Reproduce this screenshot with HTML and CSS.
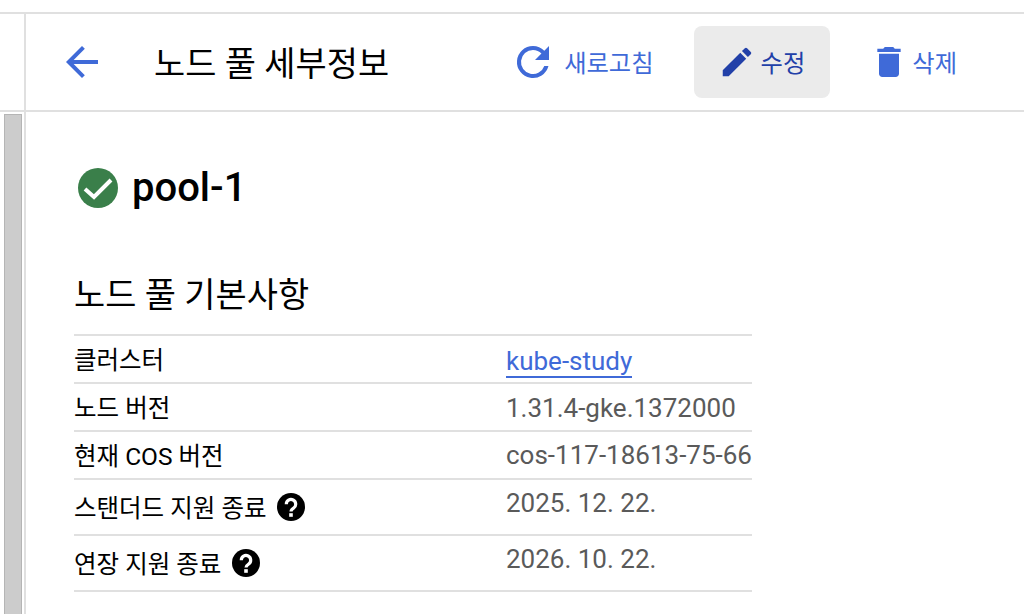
FILE: index.html
```html
<!DOCTYPE html>
<html lang="ko">
<head>
    <meta charset="UTF-8">
    <meta name="viewport" content="width=device-width, initial-scale=1.0">
    <title>노드 풀 세부정보</title>
    <link rel="stylesheet" href="styles.css">
</head>
<body>
    <div class="navbar">
        <div class="rail"></div>
        <div class="toolbar">
            <a class="back">
                <svg width="48" height="48" viewBox="0 0 24 24"><path d="M20 11H7.83l5.59-5.59L12 4l-8 8 8 8 1.41-1.41L7.83 13H20v-2z"/></svg>
            </a>
            <h1>노드 풀 세부정보</h1>
            <button class="btn btn-refresh">
                <svg width="48" height="48" viewBox="0 0 24 24"><path d="M17.65 6.35A7.96 7.96 0 0 0 12 4a8 8 0 1 0 7.73 10h-2.08A6 6 0 1 1 12 6c1.66 0 3.14.69 4.22 1.78L13 11h7V4l-2.35 2.35z"/></svg>
                <span>새로고침</span>
            </button>
            <button class="btn btn-edit">
                <svg width="38" height="38" viewBox="0 0 24 24"><path d="M3 17.25V21h3.75L17.81 9.94l-3.75-3.75L3 17.25zM20.71 7.04a1 1 0 0 0 0-1.41l-2.34-2.34a1 1 0 0 0-1.41 0l-1.83 1.83 3.75 3.75 1.83-1.83z"/></svg>
                <span>수정</span>
            </button>
            <button class="btn btn-delete">
                <svg width="40" height="40" viewBox="0 0 24 24"><path d="M6 19c0 1.1.9 2 2 2h8c1.1 0 2-.9 2-2V7H6v12zM19 4h-3.5l-1-1h-5l-1 1H5v2h14V4z"/></svg>
                <span>삭제</span>
            </button>
        </div>
    </div>
    <div class="container">
        <div class="rail">
            <div class="scrollbar"></div>
        </div>
        <div class="content">
            <div class="status">
                <svg width="40" height="40" viewBox="0 0 40 40"><circle cx="20" cy="20" r="20" fill="#3a7f4a"/><path d="M7 21l9 8L33 12" fill="none" stroke="#fff" stroke-width="4"/></svg>
                <h2>pool-1</h2>
            </div>
            <h3>노드 풀 기본사항</h3>
            <div class="details">
                <div class="row">
                    <div class="label">클러스터</div>
                    <div class="value value-link"><a class="link">kube-study</a></div>
                </div>
                <div class="row">
                    <div class="label">노드 버전</div>
                    <div class="value value-version">1.31.4-gke.1372000</div>
                </div>
                <div class="row">
                    <div class="label">현재 COS 버전</div>
                    <div class="value">cos-117-18613-75-66</div>
                </div>
                <div class="row row-tall">
                    <div class="label">스탠더드 지원 종료
                        <svg width="28" height="28" viewBox="0 0 28 28"><circle cx="14" cy="14" r="14"/><path d="M9.3 11.2a4.7 4.7 0 1 1 7.4 3.8c-1.9 1.3-2.7 2-2.7 3.6" fill="none" stroke="#fff" stroke-width="3.2"/><rect x="12.2" y="20.2" width="3.6" height="3.6" fill="#fff"/></svg>
                    </div>
                    <div class="value">2025. 12. 22.</div>
                </div>
                <div class="row row-tall">
                    <div class="label">연장 지원 종료
                        <svg width="28" height="28" viewBox="0 0 28 28"><circle cx="14" cy="14" r="14"/><path d="M9.3 11.2a4.7 4.7 0 1 1 7.4 3.8c-1.9 1.3-2.7 2-2.7 3.6" fill="none" stroke="#fff" stroke-width="3.2"/><rect x="12.2" y="20.2" width="3.6" height="3.6" fill="#fff"/></svg>
                    </div>
                    <div class="value">2026. 10. 22.</div>
                </div>
            </div>
        </div>
    </div>
</body>
</html>
```

FILE: styles.css
```css
html, body {
    height: 100%;
}

body {
    margin: 0;
    overflow: hidden;
    font-family: Roboto, "Noto Sans CJK KR", sans-serif;
    color: #000;
    background-color: #fff;
    display: flex;
    flex-direction: column;
}

.navbar {
    display: flex;
    height: 96px;
    margin-top: 12px;
    border-top: 2px solid #e0e0e0;
    border-bottom: 2px solid #e0e0e0;
}

.rail {
    width: 24px;
    flex: none;
    border-right: 2px solid #e0e0e0;
}

.toolbar {
    flex: 1;
    display: flex;
    align-items: center;
}

.back {
    display: flex;
    margin-left: 32px;
    fill: #3f6ad8;
}

h1 {
    margin: 0 auto 2px 48px;
    font-size: 33.9px;
    font-weight: 400;
}

.btn {
    display: flex;
    align-items: center;
    height: 72px;
    padding: 0 24px;
    border: none;
    border-radius: 8px;
    background: none;
    font-family: inherit;
    font-size: 24.3px;
    color: #3f6ad8;
    fill: #3f6ad8;
}

.btn span {
    margin-bottom: 2px;
}

.btn-refresh {
    gap: 7px;
}

.btn-edit {
    gap: 5px;
    padding-right: 25px;
    background-color: #ebebeb;
    color: #2240a8;
    fill: #2240a8;
    margin-left: 16px;
}

.btn-delete {
    gap: 3px;
    margin: 0 43px 0 15px;
}

.container {
    flex: 1;
    display: flex;
}

.scrollbar {
    width: 18px;
    margin: 2px 0 0 4px;
    height: 100%;
    box-sizing: border-box;
    background-color: #cccccc;
    border: 1px solid #b5b5b5;
}

.content {
    flex: 1;
    padding: 0 48px;
}

.status {
    display: flex;
    align-items: center;
    gap: 14px;
    margin-top: 54px;
    margin-left: 4px;
}

h2 {
    margin: 0;
    font-size: 40px;
    line-height: 44px;
    font-weight: 500;
}

h3 {
    margin: 58px 0 17px;
    font-size: 33.9px;
    font-weight: 400;
}

.details {
    width: 678px;
    border-top: 2px solid #e0e0e0;
}

.row {
    display: flex;
    height: 46px;
    border-bottom: 2px solid #e0e0e0;
    font-size: 24.5px;
    align-items: center;
}

.row-tall {
    height: 54px;
    align-items: flex-start;
}

.label {
    width: 432px;
    flex: none;
    display: flex;
    align-items: center;
    gap: 11px;
    margin-bottom: 2px;
}

.row-tall .label {
    margin-top: 9px;
    margin-bottom: 0;
}

.row-tall .value {
    margin-top: 8px;
}

.value {
    font-size: 26px;
    color: #5a5a5a;
    white-space: nowrap;
}

.value-link {
    margin-top: 4px;
}

.value-version {
    margin-top: 2px;
}

.link {
    color: #3f6ad8;
    border-bottom: 2px solid #3f6ad8;
}
```
